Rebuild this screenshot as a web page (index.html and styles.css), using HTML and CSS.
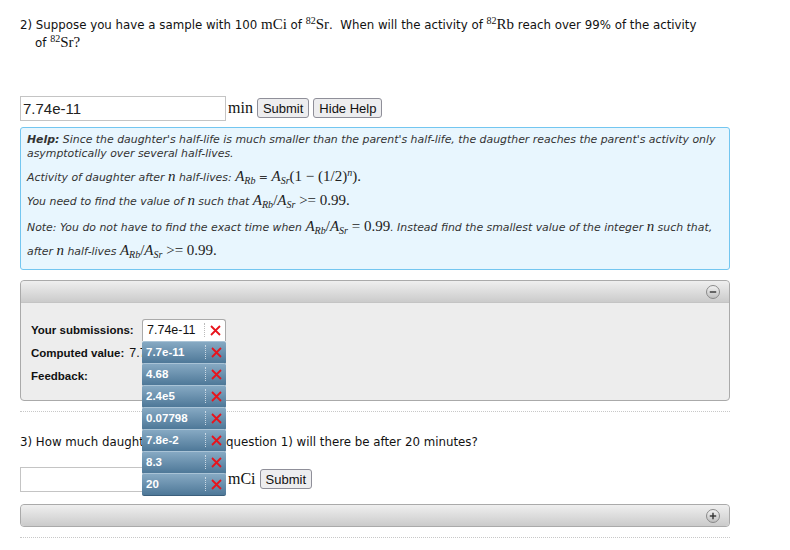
FILE: index.html
```html
<!DOCTYPE html>
<html lang="en">
<head>
    <meta charset="UTF-8">
    <title>Problem 2</title>
    <link rel="stylesheet" href="styles.css">
</head>
<body>

<div class="problem">
    <p class="question">2) Suppose you have a sample with 100 <span class="m">mCi</span> of <span class="m"><sup>82</sup>Sr</span>. &nbsp;When will the activity of <span class="m"><sup>82</sup>Rb</span> reach over 99% of the activity of <span class="m"><sup>82</sup>Sr?</span></p>

    <div class="answer-row first">
        <input class="answer" type="text" value="7.74e-11">
        <span class="m unit">min</span>
        <button class="btn">Submit</button>
        <button class="btn">Hide Help</button>
    </div>

    <div class="help">
        <p class="lead"><b>Help:</b> Since the daughter's half-life is much smaller than the parent's half-life, the daugther reaches the parent's activity only asymptotically over several half-lives.</p>
        <p>Activity of daughter after <span class="m"><i>n</i></span> half-lives: <span class="m"><i>A<sub>Rb</sub></i></span> = <span class="m"><i>A<sub>Sr</sub></i>(1 &minus; (1/2)<sup><i>n</i></sup>).</span></p>
        <p>You need to find the value of <span class="m"><i>n</i></span> such that <span class="m"><i>A<sub>Rb</sub></i>/<i>A<sub>Sr</sub></i> &gt;= 0.99.</span></p>
        <p>Note: You do not have to find the exact time when <span class="m"><i>A<sub>Rb</sub></i>/<i>A<sub>Sr</sub></i> = 0.99</span>. Instead find the smallest value of the integer <span class="m"><i>n</i></span> such that, after <span class="m"><i>n</i></span> half-lives <span class="m"><i>A<sub>Rb</sub></i>/<i>A<sub>Sr</sub></i> &gt;= 0.99.</span></p>
    </div>

    <div class="panel">
        <div class="panel-head">
            <svg class="toggle" width="16" height="16" viewBox="0 0 16 16">
                <defs>
                    <linearGradient id="tg1" x1="0" y1="0" x2="0" y2="1">
                        <stop offset="0" stop-color="#f4f4f4"/>
                        <stop offset="1" stop-color="#bdbdbd"/>
                    </linearGradient>
                </defs>
                <circle cx="8" cy="8" r="6.5" fill="url(#tg1)" stroke="#8a8a8a"/>
                <line x1="4.8" y1="8" x2="11.2" y2="8" stroke="#333" stroke-width="1.4"/>
            </svg>
        </div>
        <div class="panel-body">
            <div class="info-row">
                <span class="label">Your submissions:</span>
                <div class="subs">
                    <div class="sub-current">
                        <span class="val">7.74e-11</span>
                        <span class="x"><svg width="11" height="11" viewBox="0 0 11 11"><path d="M1 1 L10 10 M10 1 L1 10" stroke="#e8141c" stroke-width="1.8"/></svg></span>
                    </div>
                    <ul class="sub-list">
                        <li><span class="val">7.7e-11</span><span class="x"><svg width="11" height="11" viewBox="0 0 11 11"><path d="M1 1 L10 10 M10 1 L1 10" stroke="#e8141c" stroke-width="1.8"/></svg></span></li>
                        <li><span class="val">4.68</span><span class="x"><svg width="11" height="11" viewBox="0 0 11 11"><path d="M1 1 L10 10 M10 1 L1 10" stroke="#e8141c" stroke-width="1.8"/></svg></span></li>
                        <li><span class="val">2.4e5</span><span class="x"><svg width="11" height="11" viewBox="0 0 11 11"><path d="M1 1 L10 10 M10 1 L1 10" stroke="#e8141c" stroke-width="1.8"/></svg></span></li>
                        <li><span class="val">0.07798</span><span class="x"><svg width="11" height="11" viewBox="0 0 11 11"><path d="M1 1 L10 10 M10 1 L1 10" stroke="#e8141c" stroke-width="1.8"/></svg></span></li>
                        <li><span class="val">7.8e-2</span><span class="x"><svg width="11" height="11" viewBox="0 0 11 11"><path d="M1 1 L10 10 M10 1 L1 10" stroke="#e8141c" stroke-width="1.8"/></svg></span></li>
                        <li><span class="val">8.3</span><span class="x"><svg width="11" height="11" viewBox="0 0 11 11"><path d="M1 1 L10 10 M10 1 L1 10" stroke="#e8141c" stroke-width="1.8"/></svg></span></li>
                        <li><span class="val">20</span><span class="x"><svg width="11" height="11" viewBox="0 0 11 11"><path d="M1 1 L10 10 M10 1 L1 10" stroke="#e8141c" stroke-width="1.8"/></svg></span></li>
                    </ul>
                </div>
            </div>
            <div class="info-row">
                <span class="label auto">Computed value:</span> 7.7380e-11 min
            </div>
            <div class="info-row">
                <span class="label">Feedback:</span>
            </div>
        </div>
    </div>

    <hr class="sep">

    <p class="question q3">3) How much daughter activity (in question 1) will there be after 20 minutes?</p>

    <div class="answer-row">
        <input class="answer" type="text" value="">
        <span class="m unit">mCi</span>
        <button class="btn">Submit</button>
    </div>

    <div class="panel closed">
        <div class="panel-head">
            <svg class="toggle" width="16" height="16" viewBox="0 0 16 16">
                <defs>
                    <linearGradient id="tg2" x1="0" y1="0" x2="0" y2="1">
                        <stop offset="0" stop-color="#f4f4f4"/>
                        <stop offset="1" stop-color="#bdbdbd"/>
                    </linearGradient>
                </defs>
                <circle cx="8" cy="8" r="6.5" fill="url(#tg2)" stroke="#8a8a8a"/>
                <line x1="4.8" y1="8" x2="11.2" y2="8" stroke="#333" stroke-width="1.4"/>
                <line x1="8" y1="4.8" x2="8" y2="11.2" stroke="#333" stroke-width="1.4"/>
            </svg>
        </div>
    </div>

    <hr class="sep">
</div>

</body>
</html>
```

FILE: styles.css
```css
body {
    margin: 0;
    font-family: 'DejaVu Sans', sans-serif;
    font-size: 11.8px;
    color: #111;
    background: #fff;
}

.problem {
    width: 710px;
    padding: 0 20px;
}

.question {
    margin: 16px 0 0 0;
    line-height: 17px;
    padding: 0 30px 0 15px;
    text-indent: -15px;
}

.question.q3 {
    margin-top: 22px;
}

.m {
    font-family: 'Liberation Serif', 'DejaVu Serif', serif;
    font-size: 15px;
}

.m sup, .m sub {
    font-size: 10px;
}

.m sup {
    vertical-align: 5px;
    line-height: 0;
}

.m sub {
    vertical-align: -3px;
    line-height: 0;
}

.answer-row {
    display: flex;
    align-items: center;
    height: 26px;
}

.answer-row.first {
    margin-top: 43px;
}

.q3 + .answer-row {
    margin-top: 15px;
}

.answer {
    width: 200px;
    height: 21px;
    border: 1px solid #c4c4c4;
    padding: 1px 2px;
    font-family: 'Liberation Sans', sans-serif;
    font-size: 15px;
    color: #222;
    margin: 0;
}

.unit {
    margin-left: 2px;
    font-size: 16px;
}

.btn {
    margin-left: 4px;
    height: 20px;
    padding: 0 5px;
    font-family: 'Liberation Sans', sans-serif;
    font-size: 13px;
    color: #111;
    background: #ededef;
    border: 1px solid #8f8f99;
    border-radius: 3px;
}

.help {
    margin-top: 6px;
    background: #e8f6fe;
    border: 1px solid #73c6f0;
    border-radius: 3px;
    padding: 5px 6px 6px 6px;
    font-style: italic;
    color: #333;
    font-size: 10.9px;
}

.help p {
    margin: 0;
    line-height: 23px;
}

.help p.lead {
    line-height: 14px;
    margin-bottom: 4px;
}

.help p:last-child {
    line-height: 22px;
    margin-top: 2px;
}

.help .m {
    font-style: normal;
    color: #222;
}

.panel {
    margin-top: 10px;
    border: 1px solid #aaa;
    border-radius: 4px;
    background: #ededed;
}

.panel-head {
    height: 21px;
    background: linear-gradient(#efefef, #cbcbcb);
    border-bottom: 1px solid #c4c4c4;
    border-radius: 4px 4px 0 0;
    display: flex;
    justify-content: flex-end;
    align-items: center;
    padding-right: 8px;
}

.panel.closed .panel-head {
    border-bottom: none;
    border-radius: 4px;
}

.panel.closed {
    margin-top: 12px;
}

.panel-body {
    padding: 15px 10px 10px 10px;
    height: 72px;
    font-family: 'Liberation Sans', sans-serif;
}

.info-row {
    display: flex;
    align-items: center;
    height: 23px;
    white-space: nowrap;
    font-size: 12.5px;
}

.label {
    font-weight: bold;
    font-size: 11.5px;
    width: 111px;
}

.label.auto {
    width: auto;
    margin-right: 5px;
}

.subs {
    position: relative;
    width: 84px;
}

.sub-current {
    display: flex;
    align-items: center;
    height: 21px;
    background: #fff;
    border: 1px solid #aaa;
    border-bottom: none;
    border-radius: 3px 3px 0 0;
    font-size: 12.5px;
}

.val {
    flex: 1;
    padding-left: 4px;
}

.x {
    width: 20px;
    height: 14px;
    border-left: 1px dotted #bbb;
    display: flex;
    align-items: center;
    justify-content: center;
}

.sub-list {
    position: absolute;
    top: 22px;
    left: 0;
    width: 84px;
    margin: 0;
    padding: 0;
    list-style: none;
    z-index: 5;
}

.sub-list li {
    display: flex;
    align-items: center;
    height: 21px;
    background: linear-gradient(#86a9c3, #4e7898);
    border-top: 1px solid #a9c3d6;
    border-bottom: 1px solid #3b5f7c;
    margin-top: -1px;
    border-radius: 2px;
    color: #fff;
    font-weight: bold;
    font-size: 11.5px;
}

.sub-list li:first-child {
    margin-top: 0;
}

.sub-list .x {
    border-left: 1px dotted #c9d8e4;
}

.sep {
    margin: 10px 0 0 0;
    border: none;
    border-top: 1px dotted #c8c8c8;
    height: 0;
}
```
